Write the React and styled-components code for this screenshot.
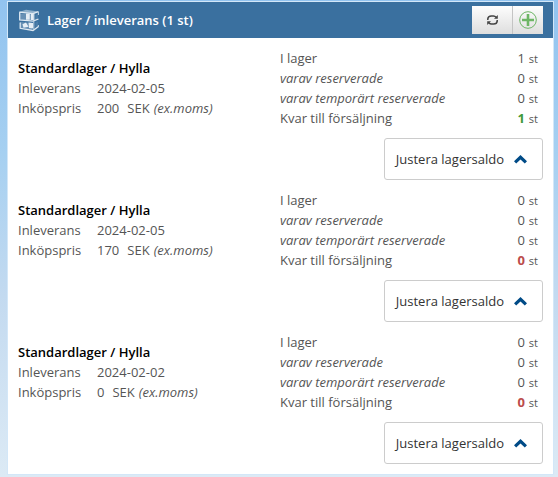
import React from "react";
import styled, { createGlobalStyle } from "styled-components";

const GlobalStyle = createGlobalStyle`
  *, *::before, *::after { box-sizing: border-box; }
  html { min-height: 100%; background: linear-gradient(#92c3ef 0%, #a6d0f1 32%, #c3daf0 62%, #dceaf5 100%); }
  body { margin: 0; font: 13px/20px "Open Sans", "Noto Sans", sans-serif; color: #555; }
`;

const Page = styled.main`
  padding: 1px 4px 2px 7px;
`;

const Panel = styled.section`
  background: #fff;
  border: 1px solid #d3e7f8;
`;

const Header = styled.header`
  display: flex;
  align-items: center;
  height: 36px;
  padding: 0 10px;
  background: #3a709f;
  color: #fff;
`;

const Title = styled.h1`
  flex: 1;
  margin: 0 0 0 7px;
  font-size: 13px;
  line-height: 20px;
  font-weight: 600;
`;

const Tools = styled.div`
  display: flex;
`;

const ToolButton = styled.button`
  display: flex;
  align-items: center;
  justify-content: center;
  width: ${(p) => (p.$wide ? "41px" : "30px")};
  height: 28px;
  padding: 0;
  border: 0;
  border-right: ${(p) => (p.$wide ? "1px solid #c4c4c4" : "0")};
  background: linear-gradient(#fdfdfd, #dedede);
  cursor: pointer;
`;

const Body = styled.div`
  padding: 10px 10px 0;
`;

const Stock = styled.article`
  display: grid;
  grid-template-columns: 262fr 263fr;
  row-gap: 10px;
  padding-bottom: 10px;
`;

const Delivery = styled.div`
  padding-top: 10px;
`;

const Place = styled.h2`
  margin: 0;
  font-size: 13px;
  line-height: 20px;
  font-weight: 600;
  color: #000;
`;

const Facts = styled.dl`
  display: grid;
  grid-template-columns: 79px 1fr;
  margin: 0;
`;

const Term = styled.dt``;

const Detail = styled.dd`
  display: flex;
  margin: 0;
`;

const Amount = styled.span`
  margin-right: 8px;
`;

const Note = styled.em`
  margin-left: 4px;
`;

const Balance = styled.table`
  width: 100%;
  border-collapse: collapse;
  align-self: start;
`;

const Label = styled.th`
  padding: 0;
  text-align: left;
  font-weight: 400;
  font-style: ${(p) => (p.$sub ? "italic" : "normal")};
`;

const Count = styled.td`
  padding: 0 5px 0 0;
  text-align: right;
`;

const Left = styled.strong`
  font-weight: 700;
  color: ${(p) => (p.$empty ? "#bb4b4b" : "#3f9a3a")};
`;

const Unit = styled.span`
  margin-left: 4px;
  font-size: 11px;
  line-height: 1;
`;

const AdjustButton = styled.button`
  grid-column: 1 / -1;
  justify-self: end;
  display: flex;
  align-items: center;
  gap: 10px;
  height: 42px;
  padding: 0 15px 0 11px;
  border: 1px solid #ccc;
  border-radius: 3px;
  background: #fff;
  color: #333;
  font: inherit;
  cursor: pointer;
`;

const ShelfIcon = () => (
  <svg width="22" height="23" viewBox="0 0 22 23" aria-hidden="true">
    <path d="M1 3 8 .8 20.500 2.500 15 5Z" fill="#8fb0cb" />
    <path d="M2 4.500 14 5.500v6L2 10.500ZM2 13l12 1v6.500L3 19Z" fill="#6890b4" />
    <path d="M8 4.500h3.800v6.300H8ZM12.800 4h3.400v7h-3.400ZM4.500 15.200 8 13.500l2.500 4.300-5 1ZM10.500 13.500l4.500.5v5.500l-4-.5Z" fill="#e6eef5" />
    <path d="M17.500 6 20 5v4.500l-2.500 1ZM17.500 13.500l2.500-1V17l-2.500 1.500Z" fill="#4a7ca8" />
    <path d="M1.700 3.300v7.500l13.300 1.400 5.500-2.200M2.200 13.500v5.800L15 21.500l5.500-4M1.300 3.200 15 4.700l5.500-2" fill="none" stroke="#dfe9f2" strokeWidth="1.300" />
    <path d="M15.800 5v16.300M20.400 3v3M20.400 16v2" stroke="#c5d6e5" />
  </svg>
);

const RefreshIcon = () => (
  <svg width="13" height="12" viewBox="0 0 13 12" fill="none" stroke="#444" strokeWidth="1.500" aria-hidden="true">
    <path d="M1.800 6V4.800C2 3 3.500 1.900 5.300 1.900H7.500c1 0 1.900.5 2.700 1.400M11.200 6v1.200c-.2 1.800-1.700 2.900-3.500 2.900H5.500c-1 0-1.900-.5-2.700-1.400" />
    <path d="M11.800 1v3.800H8ZM1.200 11V7.200H5Z" fill="#444" stroke="none" />
  </svg>
);

const AddIcon = () => (
  <svg width="18" height="18" viewBox="0 0 18 18" fill="none" stroke="#6db665" aria-hidden="true">
    <circle cx="9" cy="9" r="8.300" strokeWidth="1" />
    <path d="M9 3v12M3 9h12" strokeWidth="2.600" />
  </svg>
);

const ChevronIcon = () => (
  <svg width="13" height="9" viewBox="0 0 13 9" aria-hidden="true">
    <path d="M6.500 0 13 6.200 10.800 8.500 6.500 4.500 2.200 8.500 0 6.200Z" fill="#004b87" />
  </svg>
);

const stocks = [
  { date: "2024-02-05", price: 200, inStock: 1, left: 1 },
  { date: "2024-02-05", price: 170, inStock: 0, left: 0 },
  { date: "2024-02-02", price: 0, inStock: 0, left: 0 },
];

function BalanceRow({ label, sub, children }) {
  return (
    <tr>
      <Label scope="row" $sub={sub}>{label}</Label>
      <Count>{children}<Unit>st</Unit></Count>
    </tr>
  );
}

function StockItem({ stock }) {
  return (
    <Stock>
      <Delivery>
        <Place>Standardlager / Hylla</Place>
        <Facts>
          <Term>Inleverans</Term>
          <Detail>{stock.date}</Detail>
          <Term>Inköpspris</Term>
          <Detail>
            <Amount>{stock.price}</Amount>SEK<Note>(ex.moms)</Note>
          </Detail>
        </Facts>
      </Delivery>
      <Balance>
        <tbody>
          <BalanceRow label="I lager">{stock.inStock}</BalanceRow>
          <BalanceRow label="varav reserverade" sub>0</BalanceRow>
          <BalanceRow label="varav temporärt reserverade" sub>0</BalanceRow>
          <BalanceRow label="Kvar till försäljning">
            <Left $empty={stock.left === 0}>{stock.left}</Left>
          </BalanceRow>
        </tbody>
      </Balance>
      <AdjustButton type="button">Justera lagersaldo<ChevronIcon /></AdjustButton>
    </Stock>
  );
}

export default function App() {
  return (
    <>
      <GlobalStyle />
      <Page>
        <Panel>
          <Header>
            <ShelfIcon />
            <Title>Lager / inleverans (1 st)</Title>
            <Tools>
              <ToolButton type="button" $wide aria-label="Uppdatera"><RefreshIcon /></ToolButton>
              <ToolButton type="button" aria-label="Lägg till"><AddIcon /></ToolButton>
            </Tools>
          </Header>
          <Body>
            {stocks.map((stock, i) => <StockItem key={i} stock={stock} />)}
          </Body>
        </Panel>
      </Page>
    </>
  );
}
